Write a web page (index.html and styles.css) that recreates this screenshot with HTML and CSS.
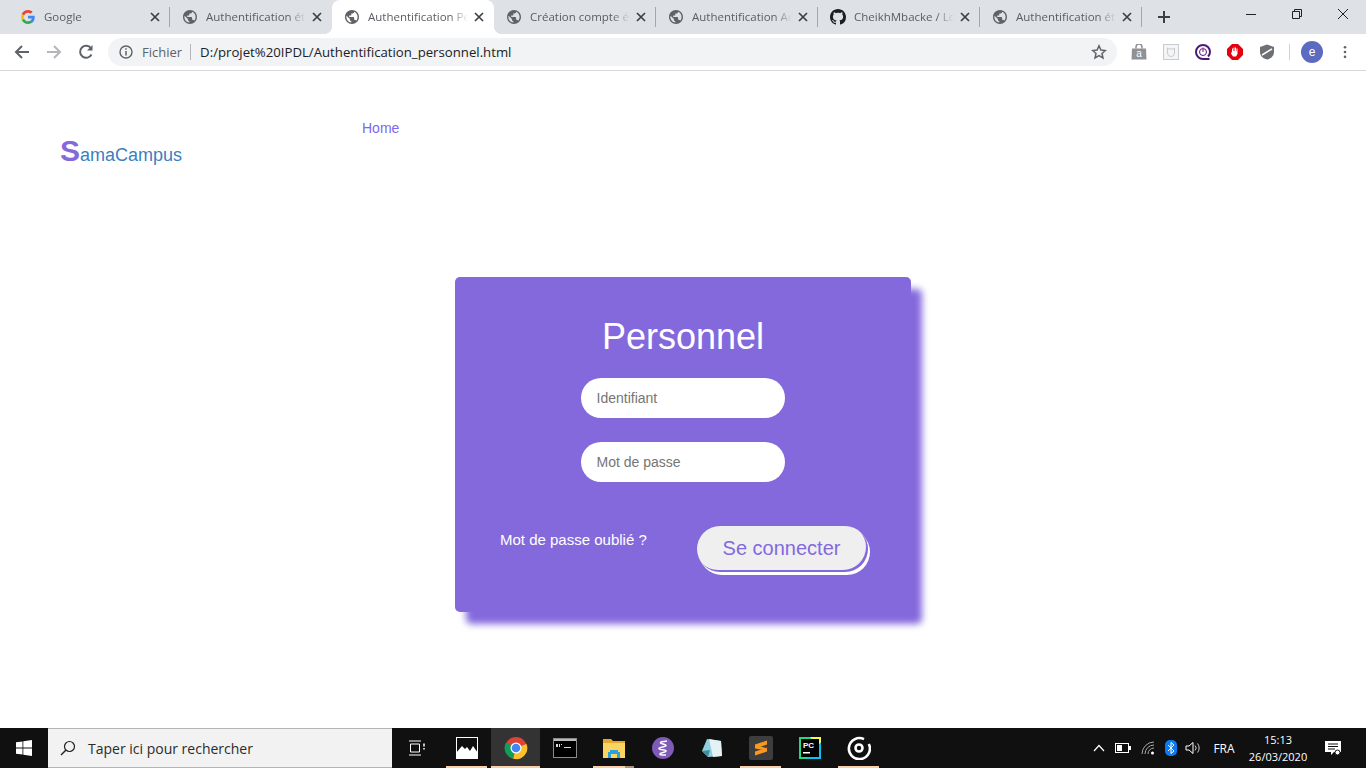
FILE: index.html
```html
<!DOCTYPE html>
<html lang="fr">
<head>
    <meta charset="UTF-8">
    <meta name="viewport" content="width=device-width, initial-scale=1.0">
    <title>Authentification Personnel</title>
    <link rel="stylesheet" href="styles.css">
</head>
<body>
    <svg class="defs" width="0" height="0">
        <symbol id="globe" viewBox="2 2 20 20">
            <path d="M12 2C6.480 2 2 6.480 2 12s4.480 10 10 10 10-4.480 10-10S17.520 2 12 2zm-1 17.930c-3.950-.49-7-3.850-7-7.930 0-.62.08-1.210.21-1.790L9 15v1c0 1.100.9 2 2 2v1.930zm6.900-2.540c-.26-.81-1-1.390-1.900-1.390h-1v-3c0-.55-.45-1-1-1H8v-2h2c.55 0 1-.45 1-1V7h2c1.100 0 2-.9 2-2v-.41c2.930 1.190 5 4.060 5 7.410 0 2.080-.8 3.970-2.100 5.390z" fill="#5f6368"/>
        </symbol>
        <symbol id="close" viewBox="0 0 10 10">
            <path d="M1 1l8 8M9 1l-8 8" stroke="#3c4043" stroke-width="1.7" fill="none"/>
        </symbol>
    </svg>

    <!-- Browser tabs -->
    <div class="tabbar">
        <div class="tab">
            <svg class="favicon" viewBox="0 0 16 16">
                <path d="M14.7 8.2c0-.5 0-1-.1-1.500H8v2.800h3.800c-.2.900-.7 1.700-1.400 2.200l2.200 1.700c1.300-1.200 2.100-3 2.100-5.200z" fill="#4285f4"/>
                <path d="M8 15c1.900 0 3.400-.6 4.600-1.700l-2.200-1.700c-.6.400-1.400.7-2.400.7-1.800 0-3.400-1.200-3.900-2.900l-2.300 1.800C3 13.400 5.300 15 8 15z" fill="#34a853"/>
                <path d="M4.100 9.400c-.3-.9-.3-1.900 0-2.800L1.800 4.800c-1 1.900-1 4.500 0 6.400z" fill="#fbbc05"/>
                <path d="M8 3.800c1 0 1.900.4 2.600 1l2-2C11.400 1.700 9.800 1 8 1 5.300 1 3 2.600 1.800 4.800l2.300 1.800C4.600 5 6.200 3.800 8 3.800z" fill="#ea4335"/>
            </svg>
            <span class="tab-title">Google</span>
            <svg class="tab-close"><use href="#close"/></svg>
        </div>
        <div class="tab no-sep">
            <svg class="favicon globe-icon"><use href="#globe"/></svg>
            <span class="tab-title">Authentification étudiant</span>
            <svg class="tab-close"><use href="#close"/></svg>
        </div>
        <div class="tab active">
            <svg class="favicon globe-icon"><use href="#globe"/></svg>
            <span class="tab-title">Authentification Personnel</span>
            <svg class="tab-close"><use href="#close"/></svg>
        </div>
        <div class="tab">
            <svg class="favicon globe-icon"><use href="#globe"/></svg>
            <span class="tab-title">Création compte étudiant</span>
            <svg class="tab-close"><use href="#close"/></svg>
        </div>
        <div class="tab">
            <svg class="favicon globe-icon"><use href="#globe"/></svg>
            <span class="tab-title">Authentification Admin</span>
            <svg class="tab-close"><use href="#close"/></svg>
        </div>
        <div class="tab">
            <svg class="favicon" viewBox="0 0 16 16">
                <path d="M8 0C3.580 0 0 3.580 0 8c0 3.540 2.290 6.530 5.470 7.590.4.070.55-.17.550-.38 0-.19-.01-.82-.01-1.490-2.010.37-2.530-.49-2.690-.94-.09-.23-.48-.94-.82-1.130-.28-.15-.68-.52-.01-.53.630-.01 1.080.58 1.230.82.720 1.210 1.870.87 2.330.66.070-.52.280-.87.510-1.070-1.780-.2-3.640-.89-3.640-3.950 0-.87.310-1.590.820-2.150-.08-.2-.36-1.020.08-2.120 0 0 .67-.21 2.200.82.640-.18 1.320-.27 2-.27s1.360.09 2 .27c1.530-1.040 2.200-.82 2.200-.82.440 1.100.16 1.920.08 2.120.51.560.82 1.270.82 2.150 0 3.070-1.870 3.750-3.650 3.950.29.250.54.730.54 1.480 0 1.070-.01 1.930-.01 2.200 0 .21.150.46.550.38A8.010 8.010 0 0 0 16 8c0-4.420-3.580-8-8-8z" fill="#1b1f23"/>
            </svg>
            <span class="tab-title">CheikhMbacke / Login</span>
            <svg class="tab-close"><use href="#close"/></svg>
        </div>
        <div class="tab">
            <svg class="favicon globe-icon"><use href="#globe"/></svg>
            <span class="tab-title">Authentification étudiant</span>
            <svg class="tab-close"><use href="#close"/></svg>
        </div>
        <svg class="new-tab" viewBox="0 0 12 12">
            <path d="M6 0v12M0 6h12" stroke="#3c4043" stroke-width="2" fill="none"/>
        </svg>
        <div class="win-controls">
            <svg class="win-btn" viewBox="0 0 12 12"><path d="M1 6.5h10" stroke="#222" fill="none"/></svg>
            <svg class="win-btn" viewBox="0 0 12 12"><path d="M1.5 3.5h7v7h-7zM3.500 3.500v-2h7v7h-2" stroke="#222" fill="none"/></svg>
            <svg class="win-btn" viewBox="0 0 12 12"><path d="M1 1l10 10M11 1l-10 10" stroke="#222" fill="none"/></svg>
        </div>
    </div>

    <!-- Address bar -->
    <div class="toolbar">
        <svg class="nav-icon" viewBox="0 0 16 16"><path d="M15 8H2M8 2L2 8l6 6" stroke="#5f6368" stroke-width="2" fill="none"/></svg>
        <svg class="nav-icon" viewBox="0 0 16 16"><path d="M1 8h13M8 2l6 6-6 6" stroke="#b4b6b9" stroke-width="2" fill="none"/></svg>
        <svg class="nav-icon" viewBox="0 0 16 16"><path d="M13.500 10.500A6 6 0 1 1 13 4.300" stroke="#5f6368" stroke-width="2" fill="none"/><path d="M14.500 1v5.500H9z" fill="#5f6368"/></svg>
        <div class="omnibox">
            <svg class="info-icon" viewBox="0 0 14 14">
                <circle cx="7" cy="7" r="6" stroke="#5f6368" stroke-width="1.400" fill="none"/>
                <path d="M7 6v4.500M7 3.200v1.600" stroke="#5f6368" stroke-width="1.500"/>
            </svg>
            <span class="scheme">Fichier</span>
            <span class="url">D:/projet%20IPDL/Authentification_personnel.html</span>
            <svg class="star" viewBox="0 0 16 16"><path d="M8 1.800l1.900 4.200 4.500.5-3.400 3 1 4.500L8 11.700 4 14l1-4.500-3.400-3 4.500-.5z" stroke="#5f6368" stroke-width="1.500" fill="none"/></svg>
        </div>
        <div class="extensions">
            <svg class="ext" viewBox="0 0 16 16"><path d="M1 4.500h14l.5 11H.5z" fill="#8f9194"/><path d="M5 4.500V3a3 3 0 0 1 6 0v1.500" fill="none" stroke="#8f9194" stroke-width="1.500"/><text x="8" y="13" class="ext-letter">a</text></svg>
            <svg class="ext" viewBox="0 0 16 16"><rect x=".5" y=".5" width="15" height="15" fill="#f4f5f6" stroke="#c9cbcd"/><path d="M4.500 4l1.500 1h4l1.500-1v5a3.500 3.500 0 0 1-7 0z" fill="none" stroke="#c9cbcd"/></svg>
            <svg class="ext" viewBox="0 0 16 16"><path d="M14.500 15H8A7 7 0 1 1 15 8c0 2-1 3.500-2 4.500" stroke="#4b1a78" stroke-width="2" fill="none"/><circle cx="8" cy="8" r="3.500" stroke="#4b1a78" fill="none"/><path d="M8 3.500v4.500" stroke="#b64fa0" stroke-width="1.500"/></svg>
            <svg class="ext" viewBox="0 0 16 16"><path d="M5 0h6l5 5v6l-5 5H5l-5-5V5z" fill="#e3000f"/><path d="M5 7V4.500h1V7h.5V3.500h1V7H8V3.500h1V7h.5V4.500h1v5.500l-1.500 2.500H6L4 9.500l.5-1z" fill="#fff"/></svg>
            <svg class="ext" viewBox="0 0 16 16"><path d="M8 .5l7 2.500v5c0 4-3 6.500-7 7.500-4-1-7-3.500-7-7.500V3z" fill="#6e7073"/><path d="M3 11L13 5" stroke="#fff" stroke-width="1.500"/></svg>
            <span class="ext-sep"></span>
            <span class="avatar">e</span>
            <svg class="menu-dots" viewBox="0 0 4 16"><circle cx="2" cy="2.500" r="1.500"/><circle cx="2" cy="8" r="1.500"/><circle cx="2" cy="13.500" r="1.500"/></svg>
        </div>
    </div>

    <!-- The page itself -->
    <main class="page">
        <header class="site-header">
            <div class="logo"><span class="logo-s">S</span>amaCampus</div>
            <nav class="site-nav"><a href="#">Home</a></nav>
        </header>
        <form class="login-card">
            <h1>Personnel</h1>
            <input type="text" placeholder="Identifiant">
            <input type="password" placeholder="Mot de passe">
            <div class="card-actions">
                <a href="#" class="forgot">Mot de passe oublié ?</a>
                <button type="button">Se connecter</button>
            </div>
        </form>
    </main>

    <!-- Windows taskbar -->
    <footer class="taskbar">
        <div class="start">
            <svg viewBox="0 0 16 16" width="16" height="16"><path d="M0 2.300l6.500-.9v6.200H0zM7.300 1.300L16 0v7.600H7.300zM0 8.400h6.500v6.200L0 13.700zM7.300 8.400H16V16l-8.700-1.200z" fill="#fff"/></svg>
        </div>
        <div class="search-box">
            <svg viewBox="0 0 16 16" width="16" height="16"><circle cx="9.500" cy="6.500" r="5" stroke="#222" stroke-width="1.200" fill="none"/><path d="M6 10l-5 5" stroke="#222" stroke-width="1.400"/></svg>
            <span>Taper ici pour rechercher</span>
        </div>
        <div class="task-view">
            <svg viewBox="0 0 18 16" width="18" height="16"><path d="M1 1h12M1 15h12M2.500 4h9v8h-9z" stroke="#fff" fill="none"/><path d="M16 3.500v3M16 8v1.500" stroke="#fff" stroke-width="1.500"/></svg>
        </div>
        <div class="app running">
            <svg viewBox="0 0 22 22" width="22" height="22"><rect width="22" height="22" fill="#fff"/><rect x="1" y="1" width="20" height="20" fill="#0f0f0f"/><path d="M0 22v-6l6-7 3 3 2-2 3 4 3-5 5 7v6z" fill="#fff"/></svg>
        </div>
        <div class="app active running">
            <svg viewBox="0 0 24 24" width="24" height="24">
                <circle cx="12" cy="12" r="11" fill="#db4437"/>
                <path d="M12 12L22.500 8A11 11 0 0 1 9 22.600z" fill="#fbc02d"/>
                <path d="M12 12L9 22.600A11 11 0 0 1 2 6.500z" fill="#0f9d58"/>
                <circle cx="12" cy="12" r="5.500" fill="#fff"/><circle cx="12" cy="12" r="4.300" fill="#4285f4"/>
            </svg>
        </div>
        <div class="app">
            <svg viewBox="0 0 24 20" width="24" height="20"><rect x=".5" y=".5" width="23" height="19" fill="#000" stroke="#8b8b8b"/><rect x="1" y="1" width="22" height="2" fill="#bbb"/><path d="M3 6h2v3H3zM6 6h1v3H6zM8 6h1v1H8zM11 9h7v1h-7z" fill="#ddd"/></svg>
        </div>
        <div class="app running stacked">
            <svg viewBox="0 0 22 20" width="22" height="20"><path d="M0 1h8l2 2h12v17H0z" fill="#e6a92f"/><path d="M0 5h22v15H0z" fill="#fcd462"/><path d="M7 12h8v2h2v6h-3v-4H8v4H5v-6h2z" fill="#2d9fd9"/></svg>
        </div>
        <div class="app">
            <svg viewBox="0 0 22 22" width="22" height="22"><circle cx="11" cy="11" r="11" fill="#7f5ab6"/><path d="M15 4c-4 .5-7 1-6.500 2S14 7 14 8.500 7 10 7 11.500s7 1 7 2.500-6 1.500-6 3 4 1 6 1" stroke="#fff" stroke-width="1.600" fill="none"/></svg>
        </div>
        <div class="app">
            <svg viewBox="0 0 22 22" width="22" height="22"><path d="M6 2l14 2 1 15-14 1L1 14z" fill="#8fd0dc"/><path d="M8 2l12 2 1 15-9 1z" fill="#e4f2f5"/><path d="M1 14l6 6 2-7z" fill="#3d8ea3"/></svg>
        </div>
        <div class="app running">
            <svg viewBox="0 0 24 24" width="24" height="24"><rect width="24" height="24" rx="2" fill="#3d3d3d"/><path d="M18 4.500v4L6 12.500v-4zM18 11.500v4L6 19.500v-4zM6 8.500l12 4-3 1.500L6 12.500z" fill="#f89820"/></svg>
        </div>
        <div class="app">
            <svg viewBox="0 0 22 22" width="22" height="22"><rect width="22" height="22" fill="#21d789"/><path d="M11 0h11v13z" fill="#fcf84a"/><path d="M22 5v17H8z" fill="#07c3f2"/><rect x="2" y="2" width="18" height="18" fill="#000"/><text x="4" y="10.500" class="pc-letters">PC</text><rect x="4" y="15" width="7" height="1.500" fill="#fff"/></svg>
        </div>
        <div class="app running">
            <svg viewBox="0 0 24 24" width="24" height="24"><path d="M17 3.200A10.500 10.500 0 1 0 21.800 8" stroke="#fff" stroke-width="2.600" fill="none"/><circle cx="12" cy="12" r="3.500" stroke="#fff" stroke-width="2.600" fill="none"/></svg>
        </div>
        <div class="tray">
            <div class="tray-icon"><svg viewBox="0 0 12 8" width="12" height="8"><path d="M1 7l5-5.500L11 7" stroke="#fff" stroke-width="1.200" fill="none"/></svg></div>
            <div class="tray-icon"><svg viewBox="0 0 16 10" width="16" height="10"><rect x=".5" y=".5" width="13" height="9" stroke="#fff" fill="none"/><rect x="2" y="2" width="5" height="6" fill="#fff"/><rect x="14" y="3" width="2" height="4" fill="#fff"/></svg></div>
            <div class="tray-icon tray-wifi"><svg viewBox="0 0 14 14" width="14" height="14"><path d="M1 13A12 12 0 0 1 13 1M4 13a9 9 0 0 1 9-9M7 13a6 6 0 0 1 6-6" stroke="#aaa" fill="none"/><circle cx="11.500" cy="12" r="1.500" fill="#fff"/></svg></div>
            <div class="tray-icon tray-bt"><svg viewBox="0 0 12 16" width="12" height="16"><rect width="12" height="16" rx="5" fill="#0a7cf0"/><path d="M3 5l6 6-3 2.500v-11L9 5l-6 6" stroke="#fff" fill="none"/></svg></div>
            <div class="tray-icon"><svg viewBox="0 0 16 14" width="16" height="14"><path d="M1 5h3l4-3.500v11L4 9H1z" stroke="#fff" fill="none"/><path d="M10 4.500a3.500 3.500 0 0 1 0 5M12.500 2.500a7 7 0 0 1 0 9" stroke="#ccc" fill="none"/></svg></div>
            <span class="lang">FRA</span>
            <div class="clock"><span>15:13</span><span>26/03/2020</span></div>
            <div class="notif"><svg viewBox="0 0 16 16" width="16" height="16"><path d="M0 1h16v11H9l-3 3v-3H0z" fill="#fff"/><path d="M3 4h10M3 6.500h10M3 9h7" stroke="#0f0f0f"/><circle cx="12.500" cy="12.500" r="2.500" fill="#fff" stroke="#0f0f0f"/></svg></div>
        </div>
    </footer>
</body>
</html>
```

FILE: styles.css
```css
* {
    box-sizing: border-box;
}
html, body {
    height: 100%;
}
body {
    margin: 0;
    display: flex;
    flex-direction: column;
    overflow: hidden;
    background-color: #fff;
    font-family: "Liberation Sans", Arial, sans-serif;
}
.defs {
    position: absolute;
}

/* browser tabs */
.tabbar {
    flex: 0 0 34px;
    display: flex;
    align-items: center;
    padding-left: 8px;
    background-color: #dee1e6;
    font-family: "Open Sans", sans-serif;
}
.tab {
    flex: 0 0 162px;
    width: 162px;
    height: 34px;
    position: relative;
    display: flex;
    align-items: center;
    padding: 0 10px 0 12px;
}
.tab::after {
    content: "";
    position: absolute;
    right: 0;
    top: 7px;
    height: 20px;
    width: 1px;
    background-color: #a3a6aa;
}
.tab.no-sep::after {
    display: none;
}
.tab.active {
    background-color: #fff;
    border-radius: 8px 8px 0 0;
}
.tab.active::before, .tab.active::after {
    content: "";
    position: absolute;
    top: auto;
    bottom: 0;
    width: 8px;
    height: 8px;
}
.tab.active::before {
    left: -8px;
    background: radial-gradient(circle at 0 0, transparent 8px, #fff 8px);
}
.tab.active::after {
    right: -8px;
    background: radial-gradient(circle at 100% 0, transparent 8px, #fff 8px);
}
.favicon {
    flex: 0 0 16px;
    width: 16px;
    height: 16px;
}
.globe-icon {
    flex-basis: 14px;
    width: 14px;
    height: 14px;
    margin: 0 1px;
}
.tab-title {
    flex: 1;
    min-width: 0;
    margin-left: 8px;
    padding-bottom: 2px;
    overflow: hidden;
    white-space: nowrap;
    font-size: 11.5px;
    color: #5a5d61;
    -webkit-mask-image: linear-gradient(to right, #000 82%, transparent 100%);
    mask-image: linear-gradient(to right, #000 82%, transparent 100%);
}
.tab-close {
    flex: 0 0 10px;
    width: 10px;
    height: 10px;
    margin-left: 6px;
}
.new-tab {
    width: 12px;
    height: 12px;
    margin-left: 16px;
}
.win-controls {
    margin-left: auto;
    display: flex;
    align-self: flex-start;
}
.win-btn {
    width: 46px;
    height: 12px;
    margin-top: 8px;
}

/* address bar */
.toolbar {
    flex: 0 0 37px;
    display: flex;
    align-items: center;
    padding: 0 0 1px 14px;
    border-bottom: 1px solid #d5d7da;
}
.nav-icon {
    flex: 0 0 16px;
    width: 16px;
    height: 16px;
    margin-right: 16px;
}
.omnibox {
    flex: 0 0 1009px;
    height: 28px;
    margin-left: -2px;
    display: flex;
    align-items: center;
    padding: 0 10px 0 11px;
    border-radius: 14px;
    background-color: #f1f3f4;
    font-family: "Open Sans", sans-serif;
    font-size: 13.2px;
}
.info-icon {
    width: 14px;
    height: 14px;
}
.scheme {
    margin-left: 9px;
    padding-right: 8px;
    border-right: 1px solid #b5b7ba;
    color: #5f6368;
    font-size: 13px;
    line-height: 16px;
}
.url {
    margin-left: 9px;
    color: #202124;
}
.star {
    margin-left: auto;
    width: 16px;
    height: 16px;
}
.extensions {
    flex: 1;
    display: flex;
    align-items: center;
    padding-left: 14px;
}
.ext {
    flex: 0 0 16px;
    width: 16px;
    height: 16px;
    margin-right: 16px;
}
.ext-letter {
    font-size: 10px;
    fill: #fff;
    text-anchor: middle;
}
.ext-sep {
    width: 1px;
    height: 16px;
    margin-left: -2px;
    background-color: #cfd1d4;
}
.avatar {
    width: 22px;
    height: 22px;
    margin-left: 11px;
    border-radius: 50%;
    background-color: #5c6bc0;
    color: #fff;
    font-size: 12px;
    line-height: 22px;
    text-align: center;
}
.menu-dots {
    width: 4px;
    height: 14px;
    margin-left: 20px;
    fill: #5f6368;
}

/* page */
.page {
    flex: 1;
    min-height: 0;
}
.site-header {
    height: 206px;
    display: flex;
    align-items: flex-start;
    padding: 48px 0 0 60px;
}
.logo {
    width: 302px;
    margin-top: 16px;
    color: #3b7fc0;
    font-size: 18px;
    line-height: 32px;
}
.logo-s {
    color: #8469dd;
    font-size: 30px;
    font-weight: bold;
}
.site-nav a {
    color: #7b68ee;
    font-size: 14px;
    line-height: 16px;
    text-decoration: none;
}
.login-card {
    width: 456px;
    height: 335px;
    margin: 0 auto;
    display: flex;
    flex-direction: column;
    align-items: center;
    padding-top: 39px;
    border-radius: 5px;
    background-color: #8469dd;
    box-shadow: 11px 12px 7px #8469dd;
}
.login-card h1 {
    margin: 0 0 20px;
    color: #fff;
    font-size: 36px;
    font-weight: normal;
    line-height: 42px;
}
.login-card input {
    width: 204px;
    height: 40px;
    margin-bottom: 24px;
    padding: 0 15.5px;
    border: 0;
    border-radius: 20px;
    background-color: #fff;
    font-family: inherit;
    font-size: 14px;
}
.card-actions {
    align-self: stretch;
    display: flex;
    align-items: flex-start;
    margin-top: 20px;
    padding-left: 45px;
}
.forgot {
    width: 197px;
    margin-top: 5px;
    color: #fff;
    font-size: 15px;
    line-height: 17px;
    text-decoration: none;
}
.card-actions button {
    width: 171px;
    height: 46px;
    padding: 0 2px 2px 0;
    border: 0;
    border-radius: 23px;
    background-color: #efefef;
    box-shadow: inset -2px -2px 0 #8469dd, 2px 3px 0 #fff;
    color: #8469dd;
    font-family: inherit;
    font-size: 20px;
}

/* windows taskbar */
.taskbar {
    flex: 0 0 40px;
    display: flex;
    align-items: stretch;
    background-color: #101010;
    font-family: "Open Sans", sans-serif;
    color: #fff;
}
.start {
    flex: 0 0 48px;
    display: flex;
    align-items: center;
    justify-content: center;
}
.search-box {
    flex: 0 0 344px;
    display: flex;
    align-items: center;
    gap: 12px;
    padding-left: 12px;
    border: 1px solid #b4b4b4;
    border-width: 1px 0;
    background-color: #f2f2f2;
    color: #2b2b2b;
    font-size: 14px;
}
.task-view {
    flex: 0 0 50px;
    display: flex;
    align-items: center;
    justify-content: center;
}
.app {
    flex: 0 0 49px;
    position: relative;
    display: flex;
    align-items: center;
    justify-content: center;
}
.app.active {
    background-color: #333;
}
.app.running::after {
    content: "";
    position: absolute;
    left: 4px;
    right: 4px;
    bottom: 0;
    height: 2px;
    background-color: #f9cfa9;
}
.app.active.running::after {
    left: 0;
    right: 0;
}
.app.stacked::after {
    background: linear-gradient(to right, #f9cfa9 78%, #a8927a 78%);
}
.pc-letters {
    font-family: "Liberation Sans", sans-serif;
    font-size: 8px;
    font-weight: bold;
    fill: #fff;
}
.tray {
    margin-left: auto;
    display: flex;
    align-items: center;
    padding-right: 13px;
}
.tray-icon {
    width: 23.5px;
    display: flex;
    justify-content: center;
}
.tray-wifi {
    margin: 0 -1px 0 2px;
}
.tray-bt {
    margin-right: -1px;
}
.lang {
    width: 38px;
    font-size: 12px;
    text-align: center;
}
.clock {
    width: 70px;
    display: flex;
    flex-direction: column;
    align-items: center;
    font-size: 11px;
    line-height: 17px;
}
.notif {
    width: 40px;
    display: flex;
    justify-content: center;
}
```
